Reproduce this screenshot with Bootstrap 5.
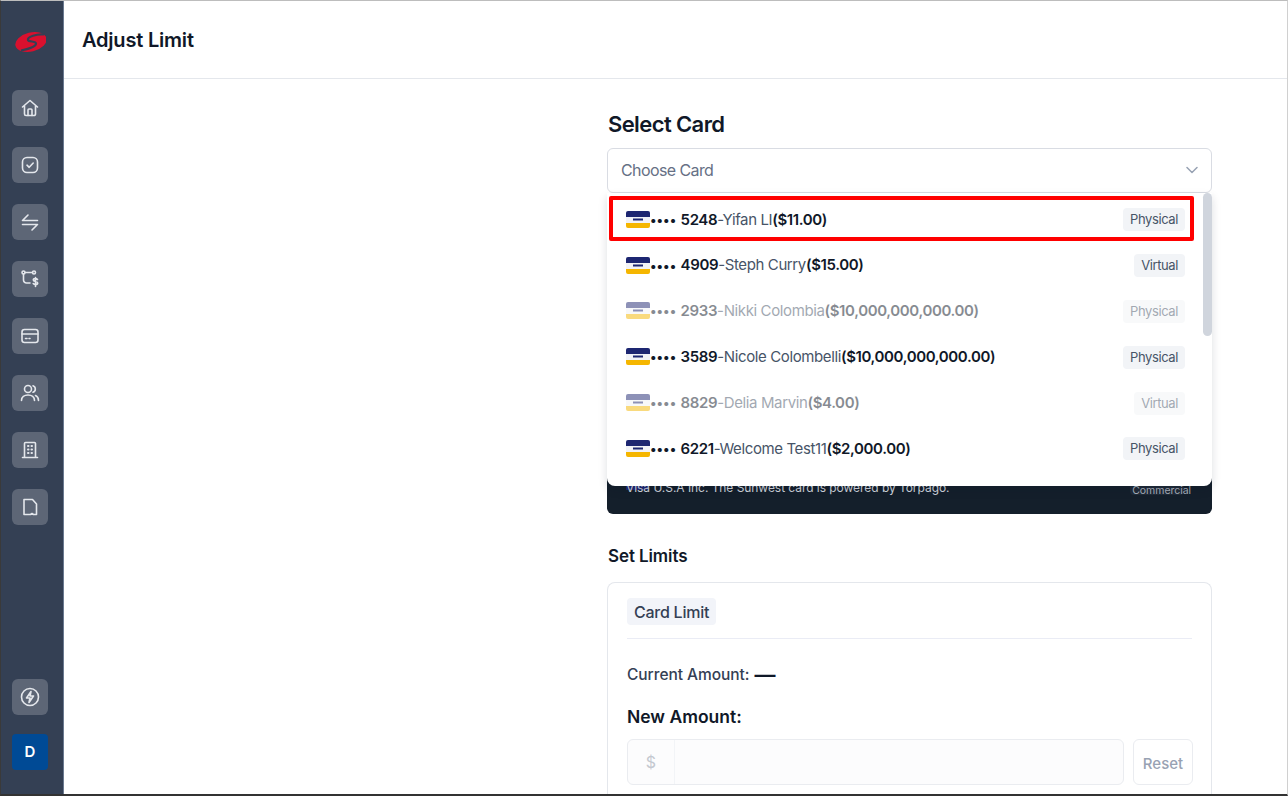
<!DOCTYPE html>
<html lang="en">
<head>
<meta charset="utf-8">
<title>Adjust Limit</title>
<link rel="stylesheet" href="https://cdn.jsdelivr.net/npm/bootstrap@5.3.0/dist/css/bootstrap.min.css">
<style>
html,body{height:100%;overflow:hidden;margin:0}
body{font-family:Inter,"Liberation Sans",sans-serif;color:#0f1728;background:#fff}
.shell{height:796px;overflow:hidden;border-top:1px solid #bdbdbd;border-left:1px solid #3a3a3a;border-right:1px solid #d0d0d0;border-bottom:2px solid #333}
.rail{width:63px;flex:none;background:#344054;border-right:1px solid #6b7a90;padding:30px 4px 24px 0}
.logo-mark{width:32px;height:22px;margin-bottom:37px}
.rail-btn{width:36px;height:36px;border-radius:6px;background:#5d6676;margin-bottom:21px;color:#e4e7ec}
.rail-btn svg{width:20px;height:20px;fill:none;stroke:currentColor;stroke-width:1.6;stroke-linecap:round;stroke-linejoin:round}
.rail-avatar{width:36px;height:36px;border-radius:4px;background:#004a95;color:#fff;font-weight:600;font-size:15px}
.rail-end .rail-btn{margin-bottom:19px}
.content{min-width:0;overflow:hidden}
.topbar{height:78px;border-bottom:1px solid #e4e7ec;padding-left:18px}
.topbar h1{font-size:20px;font-weight:600;line-height:28px;margin:1px 0 0;color:#101828;letter-spacing:-.2px}
.panel{width:605px;margin-left:543px;padding-top:30px;position:relative}
.panel h2{font-size:22px;font-weight:600;line-height:30px;margin:0 0 9px;color:#101828;letter-spacing:-.6px;padding-left:1px}
.picker{height:45px;border:1px solid #d9dce3;border-radius:6px;padding:0 13px 2px;font-size:16px;color:#667085;letter-spacing:-.6px}
.card-dark{height:112px;background:#141f2b;border-radius:0 0 6px 6px;margin-top:209px;padding:0 20px 17px 19px;font-size:12px;letter-spacing:-.05px;color:#d0d5dd;position:relative}
.card-note{position:relative}
.card-dark .tail{font-size:10.5px;color:#a9b0bb;position:relative;margin-bottom:-2px;margin-right:1px}
.peek-chip{position:absolute;left:19px;bottom:24px;width:23px;height:6px;background:#1d2671;border-radius:2px 2px 0 0}
.peek-tag{position:absolute;right:28px;bottom:19px;width:54px;height:14px;background:#1f2a37;border-radius:0 0 4px 4px}
.menu-list{position:absolute;left:0;top:114px;width:605px;height:293px;background:#fff;border-radius:0 0 8px 8px;box-shadow:0 4px 10px rgba(16,24,40,.14);z-index:5;padding-top:4px}
.menu-row{height:45.8px;padding:0 27px 0 19px;font-size:15px;color:#475467;white-space:nowrap;letter-spacing:-.38px}
.menu-row b{font-weight:600;color:#101828}
.menu-row.off{opacity:.5}
.dots{letter-spacing:0;color:#101828;font-weight:600;font-size:13px;margin-right:1px;line-height:20px}
.chip-icon{width:24px;height:17px;flex:none;margin-top:-1px}
.tag{background:#f2f4f7;border-radius:4px;font-size:13px;line-height:23px;padding:0 7px;color:#475467;letter-spacing:-.4px}
.scroll-thumb{position:absolute;right:0;top:0;width:9px;height:143px;background:#d0d5dd;border-radius:5px}
.hl{position:absolute;left:2px;top:3px;width:585px;height:45px;border:4px solid #f00;border-radius:2px;pointer-events:none;z-index:6}
.sub{font-size:17px;font-weight:600;line-height:24px;margin:30px 0 14px;color:#101828;letter-spacing:-.1px;padding-left:1px}
.limit-box{border:1px solid #e4e7ec;border-radius:8px;border-bottom:0;padding:15px 18px 0 19px;height:300px}
.pill{display:inline-block;background:#f2f4f9;border-radius:4px;font-size:16px;font-weight:500;line-height:26px;padding:1px 7px 0;color:#344054;letter-spacing:-.25px}
.sep{border-top:1px solid #eaecf5;margin:13px 1px 26px 0}
.cur{font-size:15.5px;font-weight:500;color:#344054;line-height:20px;margin-bottom:21px;letter-spacing:-.05px;display:flex;align-items:center;gap:5px}
.cur b{font-weight:600;font-size:21px;line-height:20px;color:#101828;letter-spacing:0}
.new{font-size:17.5px;font-weight:600;color:#101828;line-height:22px;margin-bottom:11px}
.amt{height:46px;border:1px solid #eaecf0;border-radius:6px;background:#fcfcfd}
.amt-pre{border-right:1px solid #f2f4f7;color:#c4c8d0;width:47px;font-size:16px}
.reset-btn{width:60px;height:46px;margin-left:9px;border:1px solid #eaecf0;border-radius:6px;background:#fff;color:#98a2b3;font-size:15px;font-weight:500;padding:5px 0 0}
</style>
</head>
<body>
<div class="shell d-flex">
  <aside class="rail d-flex flex-column align-items-center">
    <svg class="logo-mark" viewBox="-1 0 32 22" aria-label="logo"><ellipse cx="16" cy="11" rx="16" ry="9.500" fill="#d9102e" transform="rotate(-14 16 11)"/><path d="M29 3.500C22 2.500 12 6 13 9c.8 2.200 8 .8 8 3.500 0 2.800-7 5.500-15 7" fill="none" stroke="#344054" stroke-width="2.200"/></svg>
    <a class="rail-btn d-flex align-items-center justify-content-center"><svg viewBox="0 0 20 20"><path d="M2.500 9 10 2.500 17.500 9M4.500 7.500V16a1.500 1.500 0 0 0 1.500 1.500h8a1.500 1.500 0 0 0 1.500-1.500V7.500"/><path d="M8 17.500V12a1 1 0 0 1 1-1h2a1 1 0 0 1 1 1v5.500"/></svg></a>
    <a class="rail-btn d-flex align-items-center justify-content-center"><svg viewBox="0 0 20 20"><rect x="2.500" y="2.500" width="15" height="15" rx="4.500"/><path d="m7 10.200 2.200 2.100L13.200 8"/></svg></a>
    <a class="rail-btn d-flex align-items-center justify-content-center"><svg viewBox="0 0 20 20"><path d="M2.500 8.500h15M2.500 8.500 8 3M17.500 12.500h-15M17.500 12.500 12 18"/></svg></a>
    <a class="rail-btn d-flex align-items-center justify-content-center"><svg viewBox="0 0 20 20"><circle cx="3.500" cy="3.500" r="1.500"/><circle cx="14" cy="3.500" r="1.500"/><path d="M5 3.500h7.500M3.500 5v6a3 3 0 0 0 3 3H10"/><path d="M17.500 10.500c-.5-.7-1.200-1-2.200-1-1.200 0-2 .6-2 1.500 0 2 4.400 1 4.400 3 0 1-.9 1.500-2.200 1.500-1 0-1.800-.4-2.300-1M15.500 8.500v9"/></svg></a>
    <a class="rail-btn d-flex align-items-center justify-content-center"><svg viewBox="0 0 20 20"><rect x="2" y="3.500" width="16" height="13" rx="2.500"/><path d="M2 8h16M5.500 12.500h1.500M9 12.500h1"/></svg></a>
    <a class="rail-btn d-flex align-items-center justify-content-center"><svg viewBox="0 0 20 20"><circle cx="8" cy="6" r="3.500"/><path d="M1.500 17.500c0-3.500 2.800-5.500 6.500-5.500s6.500 2 6.500 5.500M13 2.700a3.500 3.500 0 0 1 0 6.600M15.500 12.500c1.900.8 3 2.600 3 5"/></svg></a>
    <a class="rail-btn d-flex align-items-center justify-content-center"><svg viewBox="0 0 20 20"><path d="M4.500 17.500V3.500a1 1 0 0 1 1-1h9a1 1 0 0 1 1 1v14M2.500 17.500h15"/><path d="M8 6h.5M11.500 6h.5M8 9.500h.5M11.500 9.500h.5M8 13h.5M11.500 13h.5" stroke-width="2"/></svg></a>
    <a class="rail-btn d-flex align-items-center justify-content-center"><svg viewBox="0 0 20 20"><path d="M4 2.500h8.500L16.500 7v10.500h-3l-1.500-1-1.500 1H4z"/></svg></a>
    <div class="rail-end mt-auto d-flex flex-column align-items-center">
      <a class="rail-btn d-flex align-items-center justify-content-center"><svg viewBox="0 0 20 20"><circle cx="10" cy="10" r="8.500"/><path d="M11 4.500 6.500 11h3.500l-1 4.500 4.500-6.500H10z"/></svg></a>
      <div class="rail-avatar d-flex align-items-center justify-content-center">D</div>
    </div>
  </aside>
  <main class="content flex-grow-1">
    <header class="topbar d-flex align-items-center"><h1>Adjust Limit</h1></header>
    <section class="panel">
      <h2>Select Card</h2>
      <div class="picker d-flex align-items-center justify-content-between">
        <span>Choose Card</span>
        <svg width="12" height="8" viewBox="0 0 12 8" fill="none" stroke="#98a2b3" stroke-width="1.500" stroke-linecap="round" stroke-linejoin="round"><path d="m1 1.500 5 5 5-5"/></svg>
      </div>
      <div class="menu-list">
        <div class="hl"></div>
        <div class="scroll-thumb"></div>
        <div class="menu-row d-flex align-items-center"><svg class="chip-icon" viewBox="0 0 24 17"><path fill="#1d2671" d="M2 0h20a2 2 0 0 1 2 2v4H0V2a2 2 0 0 1 2-2z"/><rect y="6" width="24" height="6" fill="#f1f2f7"/><path fill="#f5b600" d="M0 12h24v3a2 2 0 0 1-2 2H2a2 2 0 0 1-2-2z"/><rect x="7" y="7.500" width="10" height="2" fill="#1d2671"/></svg><span class="dots">••••</span><b>&nbsp;5248</b><span>-Yifan LI</span><b>($11.00)</b><span class="tag ms-auto">Physical</span></div>
        <div class="menu-row d-flex align-items-center"><svg class="chip-icon" viewBox="0 0 24 17"><path fill="#1d2671" d="M2 0h20a2 2 0 0 1 2 2v4H0V2a2 2 0 0 1 2-2z"/><rect y="6" width="24" height="6" fill="#f1f2f7"/><path fill="#f5b600" d="M0 12h24v3a2 2 0 0 1-2 2H2a2 2 0 0 1-2-2z"/><rect x="7" y="7.500" width="10" height="2" fill="#1d2671"/></svg><span class="dots">••••</span><b>&nbsp;4909</b><span>-Steph Curry</span><b>($15.00)</b><span class="tag ms-auto">Virtual</span></div>
        <div class="menu-row off d-flex align-items-center"><svg class="chip-icon" viewBox="0 0 24 17"><path fill="#1d2671" d="M2 0h20a2 2 0 0 1 2 2v4H0V2a2 2 0 0 1 2-2z"/><rect y="6" width="24" height="6" fill="#f1f2f7"/><path fill="#f5b600" d="M0 12h24v3a2 2 0 0 1-2 2H2a2 2 0 0 1-2-2z"/><rect x="7" y="7.500" width="10" height="2" fill="#1d2671"/></svg><span class="dots">••••</span><b>&nbsp;2933</b><span>-Nikki Colombia</span><b>($10,000,000,000.00)</b><span class="tag ms-auto">Physical</span></div>
        <div class="menu-row d-flex align-items-center"><svg class="chip-icon" viewBox="0 0 24 17"><path fill="#1d2671" d="M2 0h20a2 2 0 0 1 2 2v4H0V2a2 2 0 0 1 2-2z"/><rect y="6" width="24" height="6" fill="#f1f2f7"/><path fill="#f5b600" d="M0 12h24v3a2 2 0 0 1-2 2H2a2 2 0 0 1-2-2z"/><rect x="7" y="7.500" width="10" height="2" fill="#1d2671"/></svg><span class="dots">••••</span><b>&nbsp;3589</b><span>-Nicole Colombelli</span><b>($10,000,000,000.00)</b><span class="tag ms-auto">Physical</span></div>
        <div class="menu-row off d-flex align-items-center"><svg class="chip-icon" viewBox="0 0 24 17"><path fill="#1d2671" d="M2 0h20a2 2 0 0 1 2 2v4H0V2a2 2 0 0 1 2-2z"/><rect y="6" width="24" height="6" fill="#f1f2f7"/><path fill="#f5b600" d="M0 12h24v3a2 2 0 0 1-2 2H2a2 2 0 0 1-2-2z"/><rect x="7" y="7.500" width="10" height="2" fill="#1d2671"/></svg><span class="dots">••••</span><b>&nbsp;8829</b><span>-Delia Marvin</span><b>($4.00)</b><span class="tag ms-auto">Virtual</span></div>
        <div class="menu-row d-flex align-items-center"><svg class="chip-icon" viewBox="0 0 24 17"><path fill="#1d2671" d="M2 0h20a2 2 0 0 1 2 2v4H0V2a2 2 0 0 1 2-2z"/><rect y="6" width="24" height="6" fill="#f1f2f7"/><path fill="#f5b600" d="M0 12h24v3a2 2 0 0 1-2 2H2a2 2 0 0 1-2-2z"/><rect x="7" y="7.500" width="10" height="2" fill="#1d2671"/></svg><span class="dots">••••</span><b>&nbsp;6221</b><span>-Welcome Test11</span><b>($2,000.00)</b><span class="tag ms-auto">Physical</span></div>
      </div>
      <div class="card-dark d-flex align-items-end justify-content-between"><i class="peek-chip"></i><i class="peek-tag"></i><span class="card-note">Visa U.S.A Inc. The Sunwest card is powered by Torpago.</span><span class="tail">Commercial</span></div>
      <div class="sub">Set Limits</div>
      <div class="limit-box">
        <span class="pill">Card Limit</span>
        <div class="sep"></div>
        <div class="cur"><span>Current Amount:</span><b>—</b></div>
        <div class="new">New Amount:</div>
        <div class="d-flex">
          <div class="amt flex-grow-1 d-flex"><span class="amt-pre d-flex align-items-center justify-content-center">$</span></div>
          <button class="reset-btn" type="button">Reset</button>
        </div>
      </div>
    </section>
  </main>
</div>
<script src="https://cdn.jsdelivr.net/npm/bootstrap@5.3.0/dist/js/bootstrap.bundle.min.js"></script>
</body>
</html>
